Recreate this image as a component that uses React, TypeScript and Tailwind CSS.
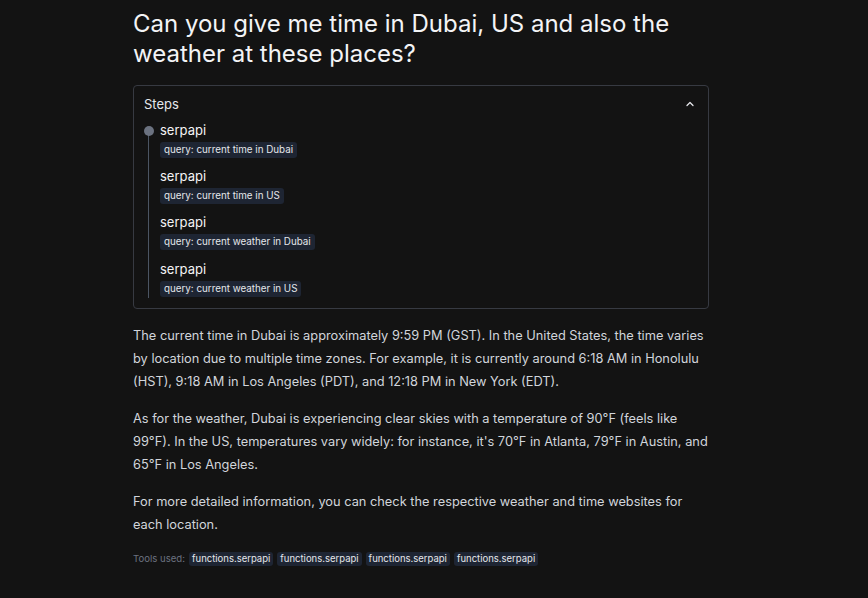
import React from "react";

const steps = [
  "query: current time in Dubai",
  "query: current time in US",
  "query: current weather in Dubai",
  "query: current weather in US",
];

export default function App() {
  return (
    <div
      className="min-h-[598px] w-full bg-[#131313] text-white"
      style={{ fontFamily: "Inter, 'Noto Sans', sans-serif" }}
    >
      <div className="ml-[133px] w-[576px] pt-[9px]">
        <h1 className="text-[24px] leading-[30px] font-normal text-[#f3f4f6]">
          Can you give me time in Dubai, US and also the weather at these places?
        </h1>
        <div className="mt-[16px] rounded-[4px] border border-[#373a42]">
          <div className="flex items-center justify-between px-[10px] pt-[8px] pb-[6px]">
            <span className="text-[13px] leading-[20px] text-[#e5e7eb]">Steps</span>
            <svg width="12" height="12" viewBox="0 0 24 24" fill="none" stroke="#e5e7eb" strokeWidth="2.5" strokeLinecap="round" strokeLinejoin="round" className="mr-[2px]">
              <path d="M6 15l6-6 6 6" />
            </svg>
          </div>
          <div className="relative ml-[10px] pb-[11px]">
            <div className="absolute left-[4px] top-[7px] bottom-[10px] w-px bg-[#4b5563]" />
            <div className="absolute left-0 top-[6px] h-[10px] w-[10px] rounded-full bg-[#6b7280]" />
            <div className="flex flex-col gap-[8px] pl-[16px]">
              {steps.map((s, i) => (
                <div key={s} className={i === 3 ? "flex flex-col items-start pt-[1px]" : "flex flex-col items-start"}>
                  <span className="text-[13px] leading-[20px] text-[#f3f4f6]">serpapi</span>
                  <span className="mt-[2px] rounded-[3px] bg-[#1e2533] px-[4px] text-[9.8px] leading-[16px] text-[#e5e7eb]">
                    {s}
                  </span>
                </div>
              ))}
            </div>
          </div>
        </div>
        <div className="mt-[15px] text-[12.8px] leading-[23px] text-[#d1d5db]">
          <p>
            The current time in Dubai is approximately 9:59 PM (GST). In the United States, the time varies by location due to multiple time zones. For example, it is currently around 6:18 AM in Honolulu (HST), 9:18 AM in Los Angeles (PDT), and 12:18 PM in New York (EDT).
          </p>
          <p className="mt-[14px]">
            As for the weather, Dubai is experiencing clear skies with a temperature of 90°F (feels like 99°F). In the US, temperatures vary widely: for instance, it's 70°F in Atlanta, 79°F in Austin, and 65°F in Los Angeles.
          </p>
          <p className="mt-[14px]">
            For more detailed information, you can check the respective weather and time websites for each location.
          </p>
        </div>
        <div className="mt-[16px] flex items-center gap-[4px]">
          <span className="text-[9.6px] text-[#6b7280]">Tools used:</span>
          {[0, 1, 2, 3].map((i) => (
            <span key={i} className="rounded-[3px] bg-[#1e2533] px-[3px] text-[9.5px] leading-[14px] text-[#e5e7eb]">
              functions.serpapi
            </span>
          ))}
        </div>
      </div>
    </div>
  );
}
